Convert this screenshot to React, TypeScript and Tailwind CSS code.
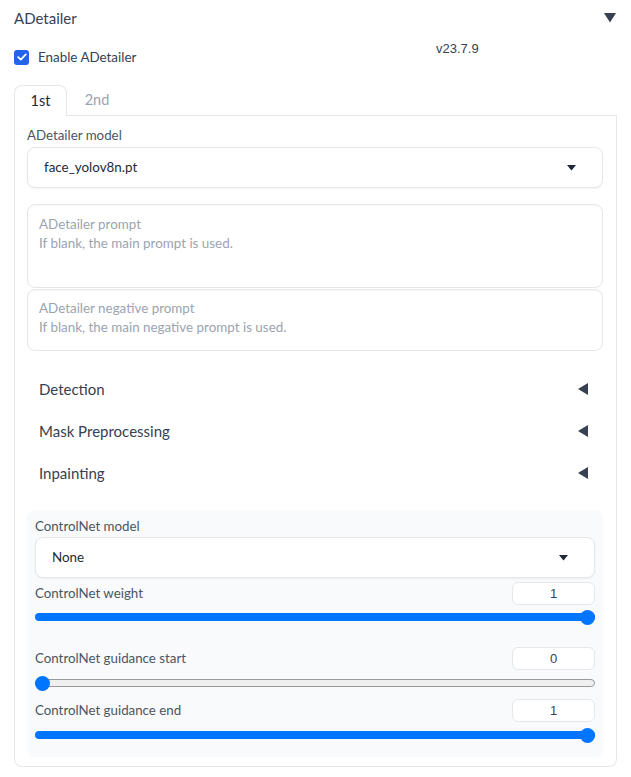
import { useState } from "react"

function Caret({ className }: { className?: string }) {
    return (
        <svg className={className} width="9" height="6" viewBox="0 0 9 6">
            <path d="M0 0 H9 L4.5 5.5 Z" fill="#1f2937" />
        </svg>
    )
}

function LeftArrow() {
    return (
        <svg width="10" height="12" viewBox="0 0 10 12">
            <path d="M10 0 V12 L0 6 Z" fill="#374151" />
        </svg>
    )
}

function Select({ value }: { value: string }) {
    return (
        <div className="flex h-[41px] items-center justify-between rounded-lg border border-[#e5e7eb] bg-white pl-[16px] pr-[26px] text-[13.4px] text-[#1f2937] shadow-[0_1px_2px_rgba(0,0,0,0.05)]">
            <span>{value}</span>
            <Caret />
        </div>
    )
}

function Slider({ label, value, pct, gap }: { label: string; value: string; pct: number; gap: string }) {
    return (
        <div className="flex flex-col">
            <div className="flex h-[23px] items-center justify-between">
                <span className="text-[13.3px] text-[#4b5563]">{label}</span>
                <div className="flex h-[23px] w-[83px] items-center justify-center rounded-md border border-[#e5e7eb] bg-white text-[13px] text-[#374151] font-['Liberation_Sans',sans-serif]">
                    {value}
                </div>
            </div>
            <div className={"relative h-[16px] " + gap}>
                {pct > 0 ? (
                    <div className="absolute left-0 right-0 top-[4px] h-[8px] rounded-full bg-[#0075ff]" />
                ) : (
                    <div className="absolute left-0 right-0 top-[4px] h-[8px] rounded-full border border-[#9a9a9a] bg-[#efefef]" />
                )}
                <div
                    className="absolute top-[0.5px] h-[15px] w-[15px] rounded-full bg-[#0075ff]"
                    style={{ left: `calc(${pct}% - ${pct > 0 ? 15 : 0}px)` }}
                />
            </div>
        </div>
    )
}

export default function App() {
    const [enabled, setEnabled] = useState(true)
    const [tab, setTab] = useState(0)

    return (
        <div className="min-h-[777px] w-[631px] bg-white px-[14px] font-['Lato',sans-serif] text-[#374151]">
            <div className="flex h-[36px] items-center justify-between">
                <span className="text-[15px]">ADetailer</span>
                <svg width="12" height="10" viewBox="0 0 12 10" className="mr-[1px]">
                    <path d="M0 0 H12 L6 9.5 Z" fill="#374151" />
                </svg>
            </div>

            <div className="flex h-[44px]">
                <label className="flex w-[422px] cursor-pointer items-center gap-[9px] pb-[2px]" onClick={() => setEnabled(!enabled)}>
                    <span className={"flex h-[15px] w-[15px] items-center justify-center rounded-[3px] " + (enabled ? "bg-[#2563eb]" : "border border-[#d1d5db]")}>
                        {enabled && (
                            <svg width="10" height="8" viewBox="0 0 10 8">
                                <path d="M1.2 4.2 L3.8 6.6 L8.8 1.4" stroke="white" strokeWidth="1.8" fill="none" strokeLinecap="round" strokeLinejoin="round" />
                            </svg>
                        )}
                    </span>
                    <span className="text-[13.4px]">Enable ADetailer</span>
                </label>
                <span className="pt-[3px] text-[13px] text-[#374151] font-['Liberation_Sans',sans-serif]">v23.7.9</span>
            </div>

            <div className="mt-[5px] flex h-[31px] items-end">
                <button onClick={() => setTab(0)} className={"h-[31px] w-[53px] rounded-t-lg text-[14.5px] " + (tab === 0 ? "border border-b-0 border-[#e5e7eb] bg-white text-[#1f2937]" : "text-[#9ca3af]")}>1st</button>
                <button onClick={() => setTab(1)} className={"h-[31px] w-[60px] rounded-t-lg text-[14.5px] " + (tab === 1 ? "border border-b-0 border-[#e5e7eb] bg-white text-[#1f2937]" : "border-b border-[#e5e7eb] text-[#9ca3af]")}>2nd</button>
                <div className="h-[1px] flex-1 bg-[#e5e7eb]" />
            </div>

            <div className="rounded-b-lg border border-t-0 border-[#e5e7eb] pb-[9px] pl-[12px] pr-[13px] pt-[9px]">
                <div className="h-[21px] text-[13.3px] leading-[21px] text-[#4b5563]">ADetailer model</div>
                <div className="mt-[1px]">
                    <Select value="face_yolov8n.pt" />
                </div>

                <div className="mt-[16px] h-[84px] rounded-lg border border-[#e5e7eb] px-[11px] pt-[10px] text-[13.4px] leading-[19px] text-[#9ca3af] shadow-[inset_0_1px_2px_rgba(0,0,0,0.04)]">
                    <div>ADetailer prompt</div>
                    <div>If blank, the main prompt is used.</div>
                </div>
                <div className="mt-[1px] h-[62px] rounded-lg border border-[#e5e7eb] px-[11px] pt-[9px] text-[13.4px] leading-[19px] text-[#9ca3af] shadow-[inset_0_1px_2px_rgba(0,0,0,0.04)]">
                    <div>ADetailer negative prompt</div>
                    <div>If blank, the main negative prompt is used.</div>
                </div>

                <div className="mt-[17px] flex flex-col">
                    {["Detection", "Mask Preprocessing", "Inpainting"].map((t) => (
                        <div key={t} className="flex h-[42px] items-center justify-between pl-[12px] pr-[15px]">
                            <span className="text-[15px] text-[#374151]">{t}</span>
                            <LeftArrow />
                        </div>
                    ))}
                </div>

                <div className="mt-[16px] flex flex-col rounded-lg bg-[#f9fafb] px-[8px] pb-[14px] pt-[6px]">
                    <div className="h-[21px] text-[13.3px] leading-[21px] text-[#4b5563]">ControlNet model</div>
                    <Select value="None" />
                    <div className="mt-[4px] flex flex-col">
                        <Slider label="ControlNet weight" value="1" pct={100} gap="mt-[4px]" />
                        <div className="h-[22px]" />
                        <Slider label="ControlNet guidance start" value="0" pct={0} gap="mt-[5px]" />
                        <div className="h-[8px]" />
                        <Slider label="ControlNet guidance end" value="1" pct={100} gap="mt-[5px]" />
                    </div>
                </div>
            </div>
        </div>
    )
}
